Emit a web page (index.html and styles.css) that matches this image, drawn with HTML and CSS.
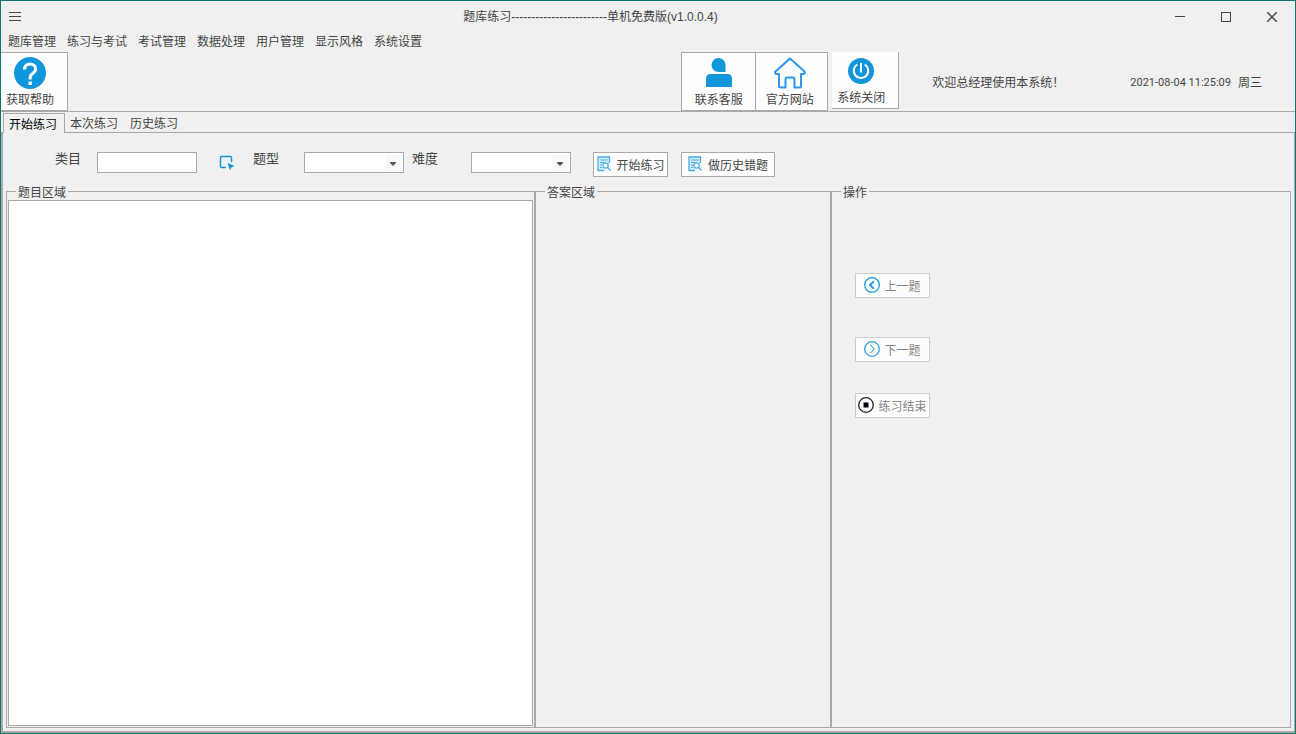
FILE: index.html
```html
<!DOCTYPE html>
<html lang="zh-CN">
<head>
<meta charset="utf-8">
<title>题库练习</title>
<link rel="stylesheet" href="styles.css">
</head>
<body>
<div class="window">
  <header class="titlebar">
    <button class="menu-toggle" type="button" aria-label="菜单">
      <svg width="12" height="9" viewBox="0 0 12 9" shape-rendering="crispEdges"><path d="M0 .5h12M0 4.5h12M0 8.5h12" stroke="#444"/></svg>
    </button>
    <h1 class="title">题库练习------------------------单机免费版(v1.0.0.4)</h1>
    <div class="controls">
      <button type="button" aria-label="最小化"><svg width="10" height="10" viewBox="0 0 10 10" shape-rendering="crispEdges"><path d="M0 4.5h10" stroke="#444"/></svg></button>
      <button type="button" aria-label="最大化"><svg width="10" height="10" viewBox="0 0 10 10" shape-rendering="crispEdges"><rect x=".5" y=".5" width="9" height="9" fill="none" stroke="#444"/></svg></button>
      <button type="button" aria-label="关闭"><svg width="10" height="10" viewBox="0 0 10 10"><path d="M0 0l10 10M10 0L0 10" stroke="#444" stroke-width="1.4"/></svg></button>
    </div>
  </header>

  <nav class="menubar">
    <button type="button">题库管理</button>
    <button type="button">练习与考试</button>
    <button type="button">考试管理</button>
    <button type="button">数据处理</button>
    <button type="button">用户管理</button>
    <button type="button">显示风格</button>
    <button type="button">系统设置</button>
  </nav>

  <div class="toolbar">
    <button class="tool tool-help" type="button">
      <svg width="32" height="32" viewBox="0 0 32 32"><circle cx="16" cy="16" r="16" fill="#1296db"/><path d="M10.500 12.500c0-3.500 2.300-5.500 5.600-5.500s5.600 2 5.600 5c0 4.200-5.500 4.300-5.500 8.500v2" fill="none" stroke="#fff" stroke-width="3"/><rect x="14.500" y="24.500" width="3.500" height="3.500" fill="#fff"/></svg>
      <span>获取帮助</span>
    </button>
    <div class="tool-group">
      <button class="tool tool-service" type="button">
        <svg width="26" height="32" viewBox="0 0 26 32"><path d="M12.500 1a7 7 0 0 1 7 7v7h-7a7 7 0 0 1 0-14z" fill="#1296db"/><path d="M0 30V22q0-5 5-5h16q5 0 5 5v8z" fill="#1296db"/></svg>
        <span>联系客服</span>
      </button>
      <button class="tool tool-site" type="button">
        <svg width="32" height="32" viewBox="0 0 32 32"><path d="M16 1.500L1.500 14.500q-1 2 1 2.500H5v12q0 1.500 1.500 1.500h5V22q0-1.500 1.500-1.500h6q1.500 0 1.500 1.500v8.500h5q1.500 0 1.500-1.500V17h2.500q2-.5 1-2.500z" fill="none" stroke="#2e96ea" stroke-width="2" stroke-linejoin="round"/></svg>
        <span>官方网站</span>
      </button>
      <button class="tool tool-power" type="button">
        <svg width="26" height="26" viewBox="0 0 26 26"><circle cx="13" cy="13" r="13" fill="#1296db"/><path d="M9.300 6.500a7.300 7.300 0 1 0 7.400 0M13 5v9.500" fill="none" stroke="#fff" stroke-width="2"/></svg>
        <span>系统关闭</span>
      </button>
    </div>
    <p class="welcome">欢迎总经理使用本系统！</p>
    <p class="clock"><time>2021-08-04 11:25:09</time><span>周三</span></p>
  </div>

  <div class="tabs" role="tablist">
    <button class="tab active" type="button" role="tab" aria-selected="true">开始练习</button>
    <button class="tab" type="button" role="tab">本次练习</button>
    <button class="tab" type="button" role="tab">历史练习</button>
  </div>

  <main class="panel">
    <form class="filters">
      <label for="category">类目</label>
      <input class="field" id="category" type="text">
      <button class="picker" type="button" aria-label="选择类目">
        <svg width="16" height="16" viewBox="0 0 16 16"><path d="M7 12.500H2.500q-1 0-1-1v-9q0-1 1-1h9q1 0 1 1V7" fill="none" stroke="#1296db" stroke-width="1.500"/><path d="M8.500 8l7 3-3 1.300-1.500 3z" fill="#1296db"/></svg>
      </button>
      <label class="label-type" for="type">题型</label>
      <span class="combo combo-type"><select class="field" id="type"><option></option></select><span class="arrow"><svg width="6" height="4" viewBox="0 0 6 4"><path d="M0 0h6v1L3 4 0 1z" fill="#555"/></svg></span></span>
      <label class="label-level" for="level">难度</label>
      <span class="combo combo-level"><select class="field" id="level"><option></option></select><span class="arrow"><svg width="6" height="4" viewBox="0 0 6 4"><path d="M0 0h6v1L3 4 0 1z" fill="#555"/></svg></span></span>
      <button class="btn btn-start" type="button">
        <svg width="14" height="16" viewBox="0 0 14 16"><path d="M12.500 7V1H1v13.500h6" fill="#d9effb" stroke="#45abe2" stroke-width="1.300"/><path d="M3 4h7.500M3 6.500h4M3 9h2M3 11.500h2" stroke="#45abe2"/><circle cx="8.500" cy="9.500" r="2.700" fill="#fff" stroke="#45abe2" stroke-width="1.200"/><path d="M10.500 11.500l3 3" stroke="#45abe2" stroke-width="1.300"/></svg>
        <span>开始练习</span>
      </button>
      <button class="btn btn-wrong" type="button">
        <svg width="14" height="16" viewBox="0 0 14 16"><path d="M12.500 7V1H1v13.500h6" fill="#d9effb" stroke="#45abe2" stroke-width="1.300"/><path d="M3 4h7.500M3 6.500h4M3 9h2M3 11.500h2" stroke="#45abe2"/><circle cx="8.500" cy="9.500" r="2.700" fill="#fff" stroke="#45abe2" stroke-width="1.200"/><path d="M10.500 11.500l3 3" stroke="#45abe2" stroke-width="1.300"/></svg>
        <span>做历史错题</span>
      </button>
    </form>

    <div class="groups">
      <fieldset class="group">
        <legend>题目区域</legend>
        <textarea class="question" aria-label="题目区域"></textarea>
      </fieldset>
      <fieldset class="group">
        <legend>答案区域</legend>
      </fieldset>
      <fieldset class="group">
        <legend>操作</legend>
        <div class="actions">
          <button class="btn" type="button" disabled>
            <svg width="16" height="16" viewBox="0 0 16 16"><circle cx="8" cy="8" r="7.300" fill="none" stroke="#2a9fde" stroke-width="1.400"/><path d="M9.800 4.300L6 8l3.800 3.700" fill="none" stroke="#2a9fde" stroke-width="2"/></svg>
            <span>上一题</span>
          </button>
          <button class="btn btn-next" type="button" disabled>
            <svg width="16" height="16" viewBox="0 0 16 16"><circle cx="8" cy="8" r="7.300" fill="none" stroke="#2a9fde" stroke-width="1.300"/><path d="M6.300 3.800L10.300 8l-4 4.200" fill="none" stroke="#55b4e6" stroke-width="1.100"/></svg>
            <span>下一题</span>
          </button>
          <button class="btn btn-end" type="button" disabled>
            <svg width="16" height="16" viewBox="0 0 16 16"><circle cx="8" cy="8" r="7.300" fill="none" stroke="#222" stroke-width="1.300"/><rect x="5.500" y="5.500" width="5" height="5" fill="#000"/></svg>
            <span>练习结束</span>
          </button>
        </div>
      </fieldset>
    </div>
  </main>
</div>
</body>
</html>
```
FILE: styles.css
```css
* {
  box-sizing: border-box;
}

body {
  margin: 0;
  background: #f0f0f0;
  color: #444;
  font: 12px/16px "Liberation Sans", "Noto Sans CJK SC", sans-serif;
}

button,
input,
select,
textarea {
  margin: 0;
  padding: 0;
  border: 0;
  border-radius: 0;
  background: none;
  color: inherit;
  font: inherit;
}

svg {
  display: block;
  flex: none;
}

h1,
p {
  margin: 0;
  font: inherit;
}

.window {
  display: flex;
  flex-direction: column;
  min-height: 100vh;
  border: 1px solid #0f766a;
}

/* Title bar */
.titlebar {
  display: flex;
  height: 31px;
}

.menu-toggle {
  width: 23px;
  padding-left: 8px;
}

.title {
  flex: 1;
  text-align: center;
  line-height: 32px;
}

.controls {
  display: flex;
}

.controls button {
  display: grid;
  place-items: center;
  width: 46px;
}

/* Menu */
.menubar {
  display: flex;
  gap: 11px;
  height: 20px;
  padding-left: 7px;
}

/* Toolbar */
.toolbar {
  display: flex;
  align-items: flex-start;
  height: 60px;
  border-bottom: 1px solid #a9a9a9;
}

.tool {
  display: flex;
  flex-direction: column;
  align-items: center;
  gap: 3px;
  height: 59px;
  padding-top: 4px;
  border: 1px solid #a9a9a9;
  background: #fdfdfd;
}

.tool-help {
  width: 67px;
  padding-right: 8px;
  border-left: 0;
}

.tool-group {
  display: flex;
  margin-left: auto;
}

.tool-service {
  width: 75px;
}

.tool-site {
  width: 72px;
  padding-right: 4px;
  border-left: 0;
}

.tool-power {
  gap: 6px;
  width: 67px;
  height: 57px;
  margin-left: 4px;
  padding: 6px 8px 0 0;
  border-width: 0 1px 1px 0;
}

.welcome {
  padding: 23px 0 0 33px;
}

.clock {
  display: flex;
  gap: 7px;
  padding: 23px 33px 0 66px;
}

.clock time {
  font-family: Roboto, sans-serif;
  font-size: 11px;
}

/* Tabs */
.tabs {
  display: flex;
  margin-top: 1px;
  padding-left: 2px;
  height: 19px;
}

.tab {
  padding: 3px 7px 0 5px;
  text-align: left;
}

.tab.active {
  z-index: 1;
  width: 62px;
  height: 20px;
  border: 1px solid #a9a9a9;
  border-bottom: 0;
  padding-top: 2px;
  background: #f0f0f0;
  color: #000;
}

.panel {
  display: flex;
  flex: 1;
  flex-direction: column;
  padding: 0 3px 3px;
  border: solid #a9a9a9;
  border-width: 1px 1px 2px 2px;
}

/* Filter row */
.filters {
  display: flex;
  align-items: flex-start;
  padding: 19px 0 7px 49px;
}

.filters label {
  font-size: 13px;
  line-height: 13px;
}

.field {
  width: 100px;
  height: 21px;
  border: 1px solid #a9a9a9;
  background: #fff;
}

input.field {
  margin-left: 16px;
  padding: 0 3px;
}

select.field {
  display: block;
  appearance: none;
}

.picker {
  margin: 3px 0 0 22px;
}

.label-type {
  margin-left: 18px;
}

.combo {
  position: relative;
}

.combo-type {
  margin-left: 25px;
}

.label-level {
  margin-left: 8px;
}

.combo-level {
  margin-left: 33px;
}

.arrow {
  position: absolute;
  inset: 2px 2px 2px auto;
  display: grid;
  place-items: center;
  width: 17px;
  padding: 3px 1px 0 0;
  background: #f8f8f8;
  pointer-events: none;
}

.btn {
  display: flex;
  align-items: center;
  justify-content: center;
  gap: 6px;
  height: 25px;
  border: 1px solid #a9a9a9;
  background: #fdfdfd;
}

.btn svg {
  margin-bottom: 2px;
}

.btn span {
  padding-top: 2px;
}

.btn-start {
  width: 75px;
  margin-left: 22px;
}

.btn-wrong {
  width: 94px;
  margin-left: 13px;
}

/* Work areas */
.groups {
  display: grid;
  flex: 1;
  grid-template-columns: 529fr 296fr 460fr;
}

.group {
  display: flex;
  min-width: 0;
  margin: 0;
  padding: 1px;
  border: 1px solid #a9a9a9;
}

.group legend {
  height: 15px;
  margin-left: 8px;
  padding: 0 2px;
  line-height: 18px;
}

.question {
  flex: 1;
  min-width: 0;
  border: 1px solid #a9a9a9;
  background: #fff;
  resize: none;
}

.actions {
  padding: 73px 0 0 22px;
}

.actions .btn {
  gap: 4px;
  width: 75px;
  border-color: #ccc;
  color: #858585;
}

.actions .btn-next {
  margin-top: 39px;
}

.actions .btn-end {
  margin-top: 31px;
}
```
